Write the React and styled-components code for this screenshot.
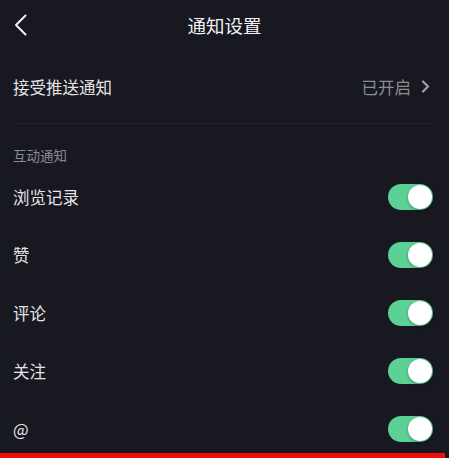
import React from "react";
import styled, { createGlobalStyle } from "styled-components";

const Global = createGlobalStyle`
  html, body { margin: 0; padding: 0; background: #181820; }
  body { font-family: "Noto Sans CJK SC", "Noto Sans", sans-serif; }
`;

const Page = styled.div`
  position: relative;
  width: 449px;
  height: 458px;
  overflow: hidden;
  background: #181820;
  color: #e6e6ea;
`;

const Header = styled.div`
  height: 50px;
  display: grid;
  grid-template-columns: 60px 1fr 60px;
  align-items: center;
`;

const BackButton = styled.div`
  display: flex;
  align-items: center;
  padding-left: 13px;
  height: 50px;
`;

const Title = styled.div`
  text-align: center;
  font-size: 18.5px;
  line-height: 24px;
  color: #f2f2f4;
  font-weight: 400;
`;

const PushRow = styled.div`
  height: 73px;
  margin: 0 13px;
  display: flex;
  align-items: center;
  justify-content: space-between;
  border-bottom: 1px solid #22222b;
`;

const Label = styled.div`
  font-size: 16.5px;
  line-height: 22px;
  color: #e4e4e8;
`;

const Status = styled.div`
  display: flex;
  align-items: center;
  gap: 10px;
  font-size: 16.5px;
  line-height: 22px;
  color: #8c8c93;
  padding-right: 6px;
`;

const SectionTitle = styled.div`
  padding: 22px 13px 0;
  height: 22px;
  font-size: 13.5px;
  line-height: 18px;
  color: #8a8a91;
`;

const Row = styled.div`
  height: 58px;
  padding: 0 16px 0 13px;
  display: flex;
  align-items: center;
  justify-content: space-between;
`;

const Track = styled.div`
  width: 45px;
  height: 26px;
  border-radius: 13px;
  background: ${(p) => (p.$on ? "#5bd196" : "#3a3a44")};
  display: flex;
  align-items: center;
  justify-content: ${(p) => (p.$on ? "flex-end" : "flex-start")};
  padding: 0 1px;
  box-sizing: border-box;
`;

const Knob = styled.div`
  width: 24px;
  height: 24px;
  border-radius: 50%;
  background: #ffffff;
  box-shadow: 0 1px 3px rgba(0, 0, 0, 0.35);
`;

const RedBar = styled.div`
  position: absolute;
  left: 0;
  bottom: 0;
  width: 445px;
  height: 5px;
  background: #f20d0d;
`;

const Toggle = ({ on }) => (
  <Track $on={on}>
    <Knob />
  </Track>
);

const items = ["浏览记录", "赞", "评论", "关注", "@"];

export default function App() {
  return (
    <Page>
      <Global />
      <Header>
        <BackButton>
          <svg width="14" height="22" viewBox="0 0 14 22">
            <path d="M12.5 1.5 L3 11 L12.5 20.5" fill="none" stroke="#f2f2f4" strokeWidth="2" strokeLinecap="round" strokeLinejoin="round" />
          </svg>
        </BackButton>
        <Title>通知设置</Title>
        <div />
      </Header>
      <PushRow>
        <Label>接受推送通知</Label>
        <Status>
          已开启
          <svg width="9" height="13" viewBox="0 0 9 13">
            <path d="M2 1.5 L7 6.5 L2 11.5" fill="none" stroke="#a0a0a8" strokeWidth="2.2" strokeLinecap="round" strokeLinejoin="round" />
          </svg>
        </Status>
      </PushRow>
      <SectionTitle>互动通知</SectionTitle>
      {items.map((t) => (
        <Row key={t}>
          <Label>{t}</Label>
          <Toggle on />
        </Row>
      ))}
      <RedBar />
    </Page>
  );
}
